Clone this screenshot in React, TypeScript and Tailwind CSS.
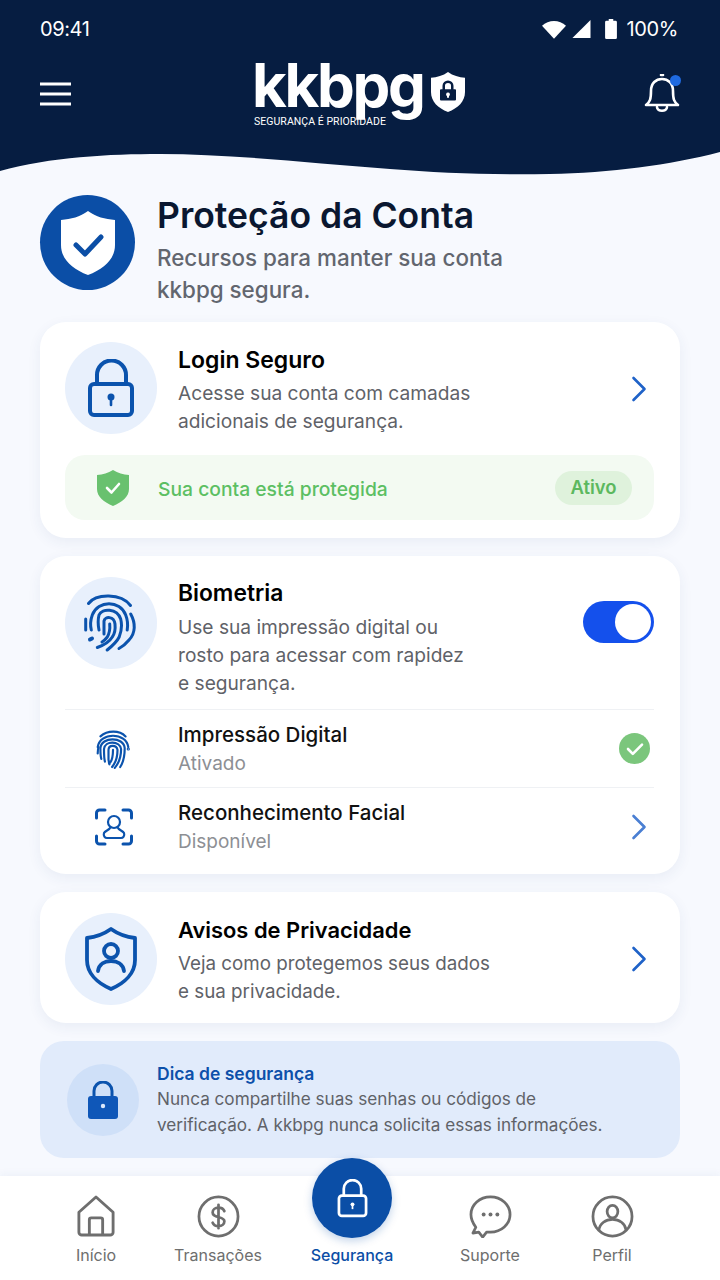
const FONT = "font-['Inter','Noto_Sans',sans-serif]";

function Chevron({ className = "" }: { className?: string }) {
  return (
    <svg viewBox="0 0 16 26" className={`w-[16px] h-[26px] ${className}`} fill="none" stroke="currentColor" strokeWidth={2.6} strokeLinecap="round" strokeLinejoin="round">
      <path d="M2.5 2l11 11-11 11" />
    </svg>
  );
}

function BigFingerprint() {
  return (
    <svg viewBox="0 0 56 58" className="w-[56px] h-[58px] text-[#0b53ad]" fill="none" stroke="currentColor" strokeWidth={3} strokeLinecap="round">
      <path d="M5.500 9.500C13 -0.500 38 -1 47.500 11.500" />
      <path d="M2.700 25v11" />
      <path d="M47.700 20c5 9 5 19-1.700 26-2.500 3-6 6.500-10 8.500" />
      <path d="M8.300 36c-1-4-.8-10 1-15C15 6 37 6 42.700 21c2 5 2 12 1.500 15" />
      <path d="M16 36c-1-5-1-11 0-15 3-7 18-7 21.700 4 1.500 6 .5 13-1.500 18-2.500 5-7 9-12 13" />
      <path d="M21 40V27c1-5 10-5 11 3 .5 5-.5 10-2.700 13-3 5-8 8-15 10.500" />
      <path d="M26.700 30c.5 5-.7 10-2.400 13-1.500 2-3.500 4-5.300 5" />
      <path d="M7 45.500l2-1" strokeWidth={4} />
    </svg>
  );
}

function SmallFingerprint() {
  return (
    <svg viewBox="0 0 40 44" className="w-[36px] h-[40px] text-[#0b53ad]" fill="none" stroke="currentColor" strokeWidth={2.4} strokeLinecap="round">
      <path d="M6 8C14 1 27 1 34 8" />
      <path d="M3 20C5 3 35 3 37 20" />
      <path d="M3 27c0-3 0-5 1-7" />
      <path d="M7 33c-1-3-1-8-1-12C7 8 32 8 33 21c0 8-1 15-5 21" />
      <path d="M11 36c-1-4-1-10-1-14C11 12 28 13 29 22c0 8-2 15-7 21" />
      <path d="M16 39c-1-2 0-2-1-5v-11c0-6 9-6 10 0 0 8-2 14-6 19" />
      <path d="M20 23c0 7-1 11-3 14" />
      <circle cx="37" cy="22" r="0.6" />
    </svg>
  );
}

function Card({ children }: { children: React.ReactNode }) {
  return <div className="bg-white rounded-[26px] shadow-[0_4px_14px_rgba(40,70,130,0.07)]">{children}</div>;
}

function IconCircle({ children }: { children: React.ReactNode }) {
  return <div className="w-[92px] h-[92px] rounded-full bg-[#e8f0fc] flex items-center justify-center shrink-0">{children}</div>;
}

function NavItem({ label, children }: { label: string; children: React.ReactNode }) {
  return (
    <div className="flex flex-col items-center">
      <div className="h-[46px] flex items-center justify-center">{children}</div>
      <span className="mt-[5px] text-[16px] leading-[22px] text-[#6e6e6e]">{label}</span>
    </div>
  );
}

export default function App() {
  return (
    <div className={`${FONT} relative w-[720px] h-[1280px] overflow-hidden bg-[#f7f9fe] flex flex-col`}>
      {/* header */}
      <header className="relative h-[175px] bg-[#061d41] text-white shrink-0">
        <div className="flex items-center justify-between pl-[40px] pr-[42px] pt-[16px] h-[26px] box-content text-[20px] leading-[26px] tracking-[-0.400px]">
          <span>09:41</span>
          <div className="flex items-center">
            <svg viewBox="0 0 26 20" className="w-[24px] h-[19px]" fill="white"><path d="M0 6C7-1 19-1 26 6L13 20z" /></svg>
            <svg viewBox="0 0 20 20" className="w-[20px] h-[19px] ml-[5px]" fill="white"><path d="M20 0v19H1z" /></svg>
            <svg viewBox="0 0 14 22" className="w-[14px] h-[20px] ml-[13px]" fill="white"><path d="M4.500 0h5v2H12a1.500 1.500 0 0 1 1.500 1.500V20.500A1.500 1.500 0 0 1 12 22H2a1.500 1.500 0 0 1-1.500-1.500V3.500A1.500 1.500 0 0 1 2 2h2.500z" /></svg>
            <span className="ml-[9px]">100%</span>
          </div>
        </div>
        <div className="flex items-start justify-between pl-[40px] pr-[40px] mt-[18px]">
          <svg viewBox="0 0 32 24" className="w-[32px] h-[24px] mt-[22px]" fill="none" stroke="white" strokeWidth={3}>
            <path d="M0 2h31M0 12h31M0 22h31" />
          </svg>
          <div className="relative w-[216px] h-[66px] mt-[2px]">
            <span className="absolute left-[2px] top-[-2px] text-[60px] leading-[50px] font-bold tracking-[-2.300px]">kkbpg</span>
            <span className="absolute left-[4px] top-[54px] text-[10.500px] leading-[12px] tracking-[0.050px] font-['Roboto',sans-serif] whitespace-nowrap">SEGURANÇA É PRIORIDADE</span>
            <svg viewBox="0 0 36 42" preserveAspectRatio="none" className="absolute left-[180px] top-[10px] w-[36px] h-[40px]" fill="white">
              <path d="M18 0c5 4 11 5.500 17 6v15c0 10-7 17-17 21C8 38 1 31 1 21V6c6-.5 12-2 17-6z" />
              <path d="M12.500 18v-3.500a5.500 5.500 0 0 1 11 0V18H25a1 1 0 0 1 1 1v10a1 1 0 0 1-1 1H11a1 1 0 0 1-1-1V19a1 1 0 0 1 1-1zm2.500 0h6v-3.500a3 3 0 0 0-6 0zM18 21.500a2 2 0 0 0-1 3.700V27h2v-1.800a2 2 0 0 0-1-3.700z" fill="#061d41" fillRule="evenodd" />
            </svg>
          </div>
          <div className="relative w-[36px] h-[40px] mt-[14px]">
            <svg viewBox="0 0 36 40" className="w-[36px] h-[40px]" fill="none" stroke="white" strokeWidth={2.600} strokeLinecap="round" strokeLinejoin="round">
              <path d="M2 31c4-3 5-6 5-14C7 9 12 5 18 5s11 4 11 12c0 8 1 11 5 14z" />
              <path d="M17 1h2" />
              <path d="M13 33c0 5 10 5 10 0" />
            </svg>
            <span className="absolute right-[-1px] top-[1px] w-[11px] h-[11px] rounded-full bg-[#1f6ae0]" />
          </div>
        </div>
        <svg viewBox="0 0 720 40" className="absolute left-0 bottom-0 w-[720px] h-[40px]" preserveAspectRatio="none">
          <path d="M0 36C50 22 110 19 160 19c70 0 150 9 230 15 50 4 100 6 160 5 60-1 120-9 170-22v23H0z" fill="#f7f9fe" />
        </svg>
      </header>

      <main className="flex-1 px-[40px] pt-[20px]">
        {/* title */}
        <div className="flex items-start gap-[22px] h-[127px]">
          <div className="w-[95px] h-[95px] rounded-full bg-[#0b4ea6] flex items-center justify-center shrink-0">
            <svg viewBox="0 0 54 64" className="w-[54px] h-[64px]">
              <path d="M27 0c8 6 17 8 27 9v25c0 14-11 24-27 30C11 58 0 48 0 34V9c10-1 19-3 27-9z" fill="white" />
              <path d="M15 34l9 9 16-17" fill="none" stroke="#0b4ea6" strokeWidth={5} strokeLinecap="round" strokeLinejoin="round" />
            </svg>
          </div>
          <div>
            <h1 className="text-[35.500px] leading-[42px] font-semibold text-[#0a1730]">Proteção da Conta</h1>
            <p className="mt-[5px] text-[22.400px] leading-[32px] font-medium text-[#62666f]">
              Recursos para manter sua conta<br />kkbpg segura.
            </p>
          </div>
        </div>

        <div className="flex flex-col gap-[18px]">
          {/* login seguro */}
          <Card>
            <div className="pl-[25px] pr-[26px] pt-[20px] pb-[18px]">
              <div className="flex items-start gap-[21px]">
                <IconCircle>
                  <svg viewBox="0 0 46 58" className="w-[46px] h-[58px]" fill="none" stroke="#0b53ad" strokeWidth={4}>
                    <path d="M9 25V16a14.500 14.500 0 0 1 29 0v9" />
                    <rect x="2" y="25" width="42" height="31" rx="4" />
                    <circle cx="23" cy="38" r="3.500" fill="#0b53ad" stroke="none" />
                    <path d="M23 38v8" strokeLinecap="round" strokeWidth={2.600} />
                  </svg>
                </IconCircle>
                <div className="pt-[3px] flex-1">
                  <h2 className="text-[23px] leading-[30px] font-semibold text-black">Login Seguro</h2>
                  <p className="mt-[4px] text-[19.150px] leading-[28px] text-[#5f6268]">Acesse sua conta com camadas<br />adicionais de segurança.</p>
                </div>
                <Chevron className="text-[#1f62c8] mt-[34px] mr-[7px]" />
              </div>
              <div className="mt-[20px] h-[65px] rounded-[20px] bg-[#f3faf2] flex items-center pl-[32px] pr-[22px]">
                <svg viewBox="0 0 32 36" className="w-[32px] h-[36px] mr-[29px]">
                  <path d="M16 0c5 3 10 4.500 16 5v14c0 8-7 13-16 17C7 32 0 27 0 19V5c6-.5 11-2 16-5z" fill="#69c16f" />
                  <path d="M10 18l4.500 4.500L22 14" fill="none" stroke="white" strokeWidth={2.600} strokeLinecap="round" strokeLinejoin="round" />
                </svg>
                <span className="flex-1 pt-[3px] text-[19.300px] font-medium text-[#5cbf63]">Sua conta está protegida</span>
                <span className="w-[77px] h-[34px] pt-[1px] rounded-full bg-[#dff2dc] flex items-center justify-center text-[18.500px] font-semibold text-[#5cb85f]">Ativo</span>
              </div>
            </div>
          </Card>

          {/* biometria */}
          <Card>
            <div className="pl-[25px] pr-[26px] pt-[21px] pb-[9px]">
              <div className="flex items-start gap-[21px] pb-[12px]">
                <IconCircle><BigFingerprint /></IconCircle>
                <div className="flex-1">
                  <h2 className="text-[22.800px] leading-[32px] font-semibold text-black">Biometria</h2>
                  <p className="mt-[4px] text-[19.150px] leading-[28px] text-[#5f6268]">Use sua impressão digital ou<br />rosto para acessar com rapidez<br />e segurança.</p>
                </div>
                <div className="w-[71px] h-[42px] mt-[24px] rounded-full bg-[#1450ec] flex items-center justify-end pr-[3px]">
                  <span className="w-[36px] h-[36px] rounded-full bg-white" />
                </div>
              </div>
              <div className="flex items-center h-[78px] border-t border-[#eff1f4]">
                <div className="w-[97px] pl-[30px]"><SmallFingerprint /></div>
                <div className="flex-1 pl-[16px] pt-[2px]">
                  <div className="text-[20.500px] leading-[28px] font-medium text-[#111]">Impressão Digital</div>
                  <div className="text-[19px] leading-[28px] mt-[1px] text-[#8d8f94]">Ativado</div>
                </div>
                <div className="w-[31px] h-[31px] rounded-full bg-[#7bc67c] flex items-center justify-center mr-[4px]">
                  <svg viewBox="0 0 20 16" className="w-[18px] h-[14px]" fill="none" stroke="white" strokeWidth={3} strokeLinecap="round" strokeLinejoin="round"><path d="M2 8l5.500 5.500L18 3" /></svg>
                </div>
              </div>
              <div className="flex items-center h-[78px] border-t border-[#eff1f4]">
                <div className="w-[97px] pl-[30px]">
                  <svg viewBox="0 0 38 38" className="w-[38px] h-[38px]" fill="none" stroke="#0b53ad" strokeWidth={3} strokeLinecap="round" strokeLinejoin="round">
                    <path d="M1.500 10V5a3 3 0 0 1 3-3H10M28 2h5.500a3 3 0 0 1 3 3v5M1.500 28v5a3 3 0 0 0 3 3H10M28 36h5.500a3 3 0 0 0 3-3v-5" />
                    <circle cx="19" cy="14" r="6" strokeWidth={2.200} />
                    <path d="M15 20c-1 2-5 3-6 5-1 3 1 5 3 5h14c2 0 4-2 3-5-1-2-5-3-6-5" strokeWidth={2.200} />
                  </svg>
                </div>
                <div className="flex-1 pl-[16px] pt-[2px]">
                  <div className="text-[20.500px] leading-[28px] font-medium text-[#111]">Reconhecimento Facial</div>
                  <div className="text-[19px] leading-[28px] mt-[1px] text-[#8d8f94]">Disponível</div>
                </div>
                <Chevron className="text-[#4a7fd3] mr-[7px]" />
              </div>
            </div>
          </Card>

          {/* privacidade */}
          <Card>
            <div className="pl-[25px] pr-[26px] pt-[21px] pb-[17px] flex items-start gap-[21px]">
              <IconCircle>
                <svg viewBox="0 0 54 64" className="w-[54px] h-[64px]" fill="none" stroke="#0b53ad" strokeWidth={3.800} strokeLinecap="round" strokeLinejoin="round">
                  <path d="M27 2c7 5 15 8 24 9v22c0 13-10 23-24 29C13 56 3 46 3 33V11c9-1 17-4 24-9z" />
                  <circle cx="27" cy="24" r="7" />
                  <path d="M14 44c1-7 7-10 13-10s12 3 13 10" />
                </svg>
              </IconCircle>
              <div className="flex-1 pt-[1px]">
                <h2 className="text-[21.900px] leading-[32px] font-semibold text-black">Avisos de Privacidade</h2>
                <p className="mt-[4px] text-[18.800px] leading-[28px] text-[#5f6268]">Veja como protegemos seus dados<br />e sua privacidade.</p>
              </div>
              <Chevron className="text-[#1f62c8] mt-[33px] mr-[7px]" />
            </div>
          </Card>

          {/* dica */}
          <div className="h-[117px] rounded-[24px] bg-[#e1ebfb] flex items-center pl-[27px]">
            <div className="w-[72px] h-[72px] rounded-full bg-[#cfe0f8] flex items-center justify-center shrink-0">
              <svg viewBox="0 0 32 38" className="w-[32px] h-[38px]">
                <path d="M7 17v-7a9 9 0 0 1 18 0v7" fill="none" stroke="#0b53ad" strokeWidth={3} />
                <rect x="1" y="15" width="30" height="23" rx="3" fill="#0f57b8" />
                <circle cx="16" cy="25" r="2.200" fill="#dbe8fb" />
              </svg>
            </div>
            <div className="pl-[18px] pt-[1px]">
              <div className="text-[17.500px] leading-[24px] font-semibold text-[#0c50aa]">Dica de segurança</div>
              <p className="text-[17.150px] leading-[26px] text-[#5f6268] whitespace-nowrap">Nunca compartilhe suas senhas ou códigos de<br />verificação. A kkbpg nunca solicita essas informações.</p>
            </div>
          </div>
        </div>
      </main>

      {/* bottom nav */}
      <nav className="relative h-[104px] shrink-0 bg-white shadow-[0_-2px_8px_rgba(40,70,130,0.05)] pl-[35px] pt-[17px] grid grid-cols-[122px_122px_146px_130px_114px] items-start">
        <NavItem label="Início">
          <svg viewBox="0 0 40 44" className="w-[38px] h-[42px]" fill="none" stroke="#6e6e6e" strokeWidth={3} strokeLinejoin="round">
            <path d="M2 18L20 2l18 16v21a3 3 0 0 1-3 3H5a3 3 0 0 1-3-3z" />
            <path d="M13 42V26a2 2 0 0 1 2-2h10a2 2 0 0 1 2 2v16" />
          </svg>
        </NavItem>
        <NavItem label="Transações">
          <svg viewBox="0 0 44 44" className="w-[43px] h-[43px]" fill="none" stroke="#6e6e6e" strokeWidth={2.800} strokeLinecap="round">
            <circle cx="22" cy="22" r="20" />
            <path d="M28 16.500c-1-2.500-3.500-3.500-6-3.500-3.500 0-6 2-6 4.800 0 6.500 12 3.500 12 9 0 3-2.500 5-6 5-2.500 0-5-1-6-3.500M22 10v24" />
          </svg>
        </NavItem>
        <div className="flex flex-col items-center">
          <div className="absolute top-[-18px] w-[80px] h-[80px] rounded-full bg-[#0b4ea6] flex items-center justify-center shadow-[0_3px_8px_rgba(11,78,166,0.25)]">
            <svg viewBox="0 0 32 40" className="w-[31px] h-[39px]" fill="none" stroke="white" strokeWidth={2.800}>
              <path d="M7 17V10a9 9 0 0 1 18 0v7" />
              <rect x="2" y="17" width="28" height="21" rx="3" />
              <circle cx="16" cy="26" r="2" fill="white" stroke="none" />
              <path d="M16 26v5" strokeWidth={1.800} />
            </svg>
          </div>
          <span className="mt-[51px] text-[16px] leading-[22px] font-medium text-[#0b4ea6]">Segurança</span>
        </div>
        <NavItem label="Suporte">
          <svg viewBox="0 0 44 44" className="w-[43px] h-[43px]" fill="none" stroke="#6e6e6e" strokeWidth={2.800} strokeLinejoin="round">
            <path d="M22 2c11 0 20 8 20 18 0 10-9 18-20 18-2 0-3 0-4 0l-4 5-4-5-6 1 3-6C4 29 2 25 2 20 2 10 11 2 22 2z" />
            <circle cx="15" cy="20" r="2" fill="#6e6e6e" stroke="none" />
            <circle cx="22" cy="20" r="2" fill="#6e6e6e" stroke="none" />
            <circle cx="29" cy="20" r="2" fill="#6e6e6e" stroke="none" />
          </svg>
        </NavItem>
        <NavItem label="Perfil">
          <svg viewBox="0 0 44 44" className="w-[43px] h-[43px]" fill="none" stroke="#6e6e6e" strokeWidth={2.800}>
            <circle cx="22" cy="22" r="20" />
            <ellipse cx="22" cy="17" rx="5.500" ry="6.500" />
            <path d="M8 36c1-7 7-11 14-11s13 4 14 11" />
          </svg>
        </NavItem>
      </nav>
    </div>
  );
}
